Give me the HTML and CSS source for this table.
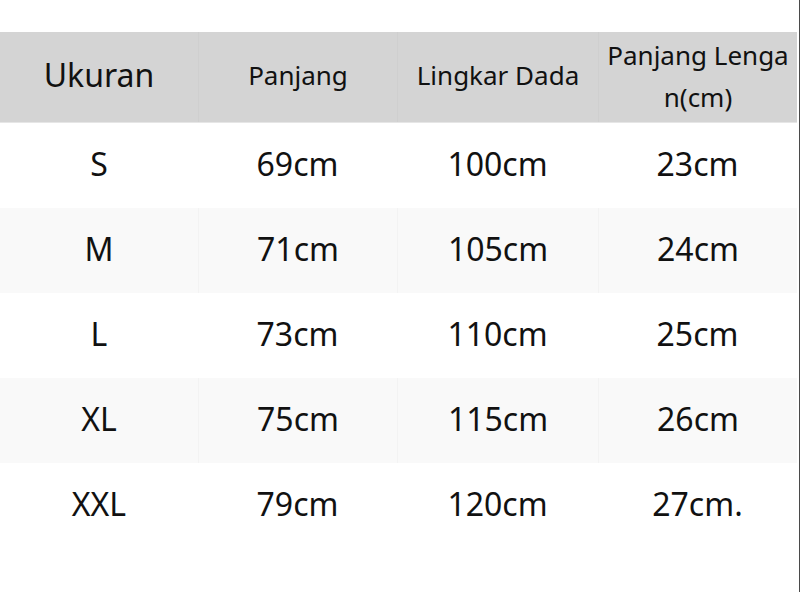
FILE: index.html
```html
<!DOCTYPE html>
<html>
<head>
<meta charset="utf-8">
<link rel="stylesheet" href="styles.css">
</head>
<body>
<div class="page">
  <div class="table">
    <div class="row head">
      <div class="cell big">Ukuran</div>
      <div class="cell">Panjang</div>
      <div class="cell">Lingkar Dada</div>
      <div class="cell wrap">Panjang Lenga<br>n(cm)</div>
    </div>
    <div class="row"><div class="cell">S</div><div class="cell">69cm</div><div class="cell">100cm</div><div class="cell">23cm</div></div>
    <div class="row alt"><div class="cell">M</div><div class="cell">71cm</div><div class="cell">105cm</div><div class="cell">24cm</div></div>
    <div class="row"><div class="cell">L</div><div class="cell">73cm</div><div class="cell">110cm</div><div class="cell">25cm</div></div>
    <div class="row alt"><div class="cell">XL</div><div class="cell">75cm</div><div class="cell">115cm</div><div class="cell">26cm</div></div>
    <div class="row"><div class="cell">XXL</div><div class="cell">79cm</div><div class="cell">120cm</div><div class="cell">27cm.</div></div>
  </div>
</div>
</body>
</html>
```

FILE: styles.css
```css
html, body {
  margin: 0;
  padding: 0;
  background: #ffffff;
}
.page {
  width: 800px;
  height: 592px;
  border-right: 1px solid #4a4a4a;
  padding-top: 32px;
  box-sizing: border-box;
  font-family: "Noto Sans", "Open Sans", sans-serif;
  color: #111111;
}
.table {
  width: 797px;
}
.row {
  display: grid;
  grid-template-columns: 198px 199px 201px 199px;
  height: 85px;
}
.row.alt {
  background: #f9f9f9;
}
.row.alt .cell + .cell {
  border-left: 1px solid #f3f3f3;
}
.row.head {
  height: 91px;
  background: #d4d4d4;
  border-bottom: 1px solid #e6e6e6;
  box-sizing: border-box;
}
.row.head .cell + .cell {
  border-left: 1px solid #cfcfcf;
}
.cell {
  display: flex;
  align-items: center;
  justify-content: center;
  text-align: center;
  font-size: 32px;
  padding-bottom: 5px;
  box-sizing: border-box;
}
.head .cell {
  font-size: 26px;
  padding-bottom: 4px;
}
.head .cell.big {
  font-size: 32px;
  padding-bottom: 6px;
}
.head .cell.wrap {
  line-height: 42px;
  padding-bottom: 2px;
}
```
